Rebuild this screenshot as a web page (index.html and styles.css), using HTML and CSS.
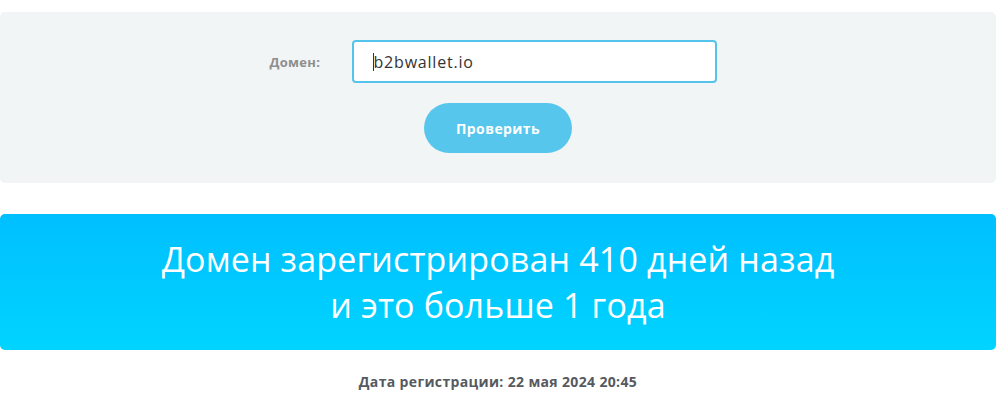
FILE: index.html
```html
<!DOCTYPE html>
<html lang="ru">
<head>
<meta charset="utf-8">
<title>Проверка домена</title>
<link rel="stylesheet" href="styles.css">
</head>
<body>
<div class="page">
  <form class="check-panel">
    <div class="form-row">
      <label class="form-label" for="domain">Домен:</label>
      <div class="input-box" id="domain"><span class="caret"></span>b2bwallet.io</div>
    </div>
    <button type="button" class="check-btn">Проверить</button>
  </form>
  <div class="result-banner">
    <p class="result-line">Домен зарегистрирован 410 дней назад</p>
    <p class="result-line">и это больше 1 года</p>
  </div>
  <p class="reg-date">Дата регистрации: 22 мая 2024 20:45</p>
</div>
</body>
</html>
```
FILE: styles.css
```css
html, body {
  margin: 0;
  padding: 0;
  background: #ffffff;
}
.page {
  width: 996px;
  padding-top: 12px;
  font-family: "Open Sans", "DejaVu Sans", sans-serif;
}
.check-panel {
  background: #f2f5f6;
  border-radius: 5px;
  height: 171px;
  box-sizing: border-box;
  padding-top: 28px;
  display: flex;
  flex-direction: column;
  align-items: center;
  margin: 0;
}
.form-row {
  display: flex;
  align-items: center;
  margin-left: -10px;
}
.form-label {
  width: 82px;
  font-size: 13px;
  font-weight: 700;
  letter-spacing: 0.3px;
  color: #8e8e8e;
}
.input-box {
  width: 365px;
  height: 43px;
  box-sizing: border-box;
  border: 2px solid #55c4ec;
  border-radius: 4px;
  background: #ffffff;
  padding-left: 19px;
  display: flex;
  align-items: center;
  font-size: 16px;
  letter-spacing: 0.8px;
  color: #333333;
}
.caret {
  display: inline-block;
  width: 1px;
  height: 18px;
  background: #333;
}
.check-btn {
  margin-top: 20px;
  width: 148px;
  height: 50px;
  border: none;
  border-radius: 25px;
  background: #56c6ed;
  color: #ffffff;
  font-family: inherit;
  font-size: 14px;
  font-weight: 700;
  letter-spacing: 0.4px;
}
.result-banner {
  margin-top: 31px;
  height: 136px;
  border-radius: 5px;
  background: linear-gradient(180deg, #00bfff 0%, #00d4ff 100%);
  display: flex;
  flex-direction: column;
  align-items: center;
  justify-content: center;
}
.result-line {
  margin: 0;
  color: #ffffff;
  font-size: 34px;
  letter-spacing: 0.15px;
  line-height: 46px;
  font-weight: 400;
}
.reg-date {
  margin: 22px 0 0;
  text-align: center;
  font-size: 14px;
  font-weight: 700;
  letter-spacing: 0.35px;
  color: #555a60;
}
```
